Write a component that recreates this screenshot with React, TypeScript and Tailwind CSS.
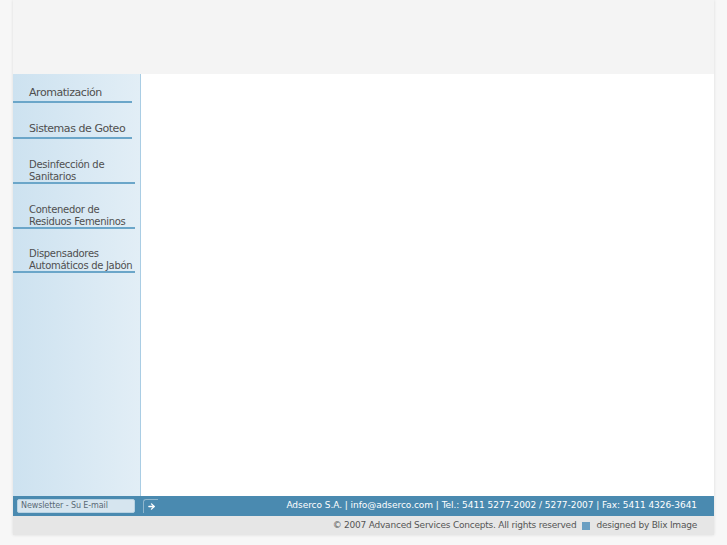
import { ArrowRight } from "lucide-react";

const items = [
  { lines: ["Aromatización"], big: true, pt: "pt-[12px]", lw: "w-[119px]" },
  { lines: ["Sistemas de Goteo"], big: true, pt: "pt-[19px]", lw: "w-[119px]" },
  { lines: ["Desinfección de", "Sanitarios"], big: false, pt: "pt-[20px]", lw: "w-[122px]" },
  { lines: ["Contenedor de", "Residuos Femeninos"], big: false, pt: "pt-[20px]", lw: "w-[122px]" },
  { lines: ["Dispensadores", "Automáticos de Jabón"], big: false, pt: "pt-[19px]", lw: "w-[122px]" },
];

export default function App() {
  return (
    <div className="min-h-[545px] w-[727px] bg-[#f7f7f7] font-['DejaVu_Sans',sans-serif]">
      <div className="ml-[13px] w-[701px] shadow-[0_0_3px_rgba(0,0,0,0.12)]">
        {/* Header */}
        <div className="h-[74px] bg-[#f4f4f4]" />

        {/* Body */}
        <div className="flex h-[422px]">
          <div className="w-[128px] border-r border-[#a9cde4] bg-gradient-to-r from-[#cde2f0] to-[#e2eef6]">
            {items.map((item, i) => (
              <div key={i} className={item.pt}>
                <div
                  className={`pl-[16px] text-[#4f4f4f] ${
                    item.big
                      ? "pb-[1px] text-[11px] leading-[14px] tracking-[-0.45px]"
                      : "pb-[0px] text-[10px] leading-[11.5px] tracking-[-0.3px]"
                  }`}
                >
                  {item.lines.map((l, j) => (
                    <div key={j}>{l}</div>
                  ))}
                </div>
                <div className={`h-[2px] ${item.lw} bg-[#6ba6c9]`} />
              </div>
            ))}
          </div>
          <div className="flex-1 bg-white" />
        </div>

        {/* Blue footer bar */}
        <div className="flex h-[20px] items-center bg-[#4a8ab0] pl-[4px] pr-[17px]">
          <div className="flex h-[14px] w-[118px] items-center rounded-[2px] border border-[#b8d2e2] bg-[#d6e5ef] pl-[3px] text-[8px] tracking-[-0.1px] text-[#5a6a75]">
            Newsletter - Su E-mail
          </div>
          <div className="ml-[8px] flex h-[14px] w-[15px] items-center justify-center rounded-tl-[3px] border-l border-t border-[#8fb6cd]">
            <ArrowRight size={9} strokeWidth={3.5} className="text-white" />
          </div>
          <div className="ml-auto text-[9px] tracking-[-0.05px] text-white">
            Adserco S.A. | info@adserco.com | Tel.: 5411 5277-2002 / 5277-2007 | Fax: 5411 4326-3641
          </div>
        </div>

        {/* Gray bottom bar */}
        <div className="flex h-[19px] items-center justify-end bg-[#e6e6e6] pr-[17px] text-[9px] tracking-[-0.22px] text-[#555]">
          <span>© 2007 Advanced Services Concepts. All rights reserved</span>
          <span className="ml-[6px] mr-[6px] inline-block h-[8px] w-[8px] bg-[#6b9fc2]" />
          <span>designed by Blix Image</span>
        </div>
      </div>
    </div>
  );
}
